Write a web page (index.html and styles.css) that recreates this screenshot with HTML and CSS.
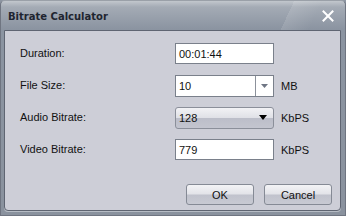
FILE: index.html
```html
<!DOCTYPE html>
<html>
<head>
<meta charset="utf-8">
<link rel="stylesheet" href="styles.css">
</head>
<body>
<div class="window">
  <div class="titlebar">
    <span class="title">Bitrate Calculator</span>
    <svg class="close" width="12" height="12" viewBox="0 0 12 12"><path d="M1.5 1.5 L10.5 10.5 M10.5 1.5 L1.5 10.5" stroke="#fff" stroke-width="2" stroke-linecap="square"/></svg>
  </div>
  <div class="panel">
    <div class="form">
      <label class="lbl">Duration:</label>
      <div class="field text">00:01:44</div>
      <span class="unit"></span>

      <label class="lbl">File Size:</label>
      <div class="field combo">
        <span class="val">10</span>
        <span class="drop"><svg width="7" height="4" viewBox="0 0 7 4"><path d="M0 0 H7 L3.5 4 Z" fill="#6f7684"/></svg></span>
      </div>
      <span class="unit">MB</span>

      <label class="lbl">Audio Bitrate:</label>
      <div class="field select">
        <span class="val">128</span>
        <svg width="8" height="5" viewBox="0 0 8 5"><path d="M0 0 H8 L4 5 Z" fill="#000"/></svg>
      </div>
      <span class="unit">KbPS</span>

      <label class="lbl">Video Bitrate:</label>
      <div class="field text">779</div>
      <span class="unit">KbPS</span>
    </div>
    <div class="buttons">
      <button class="btn">OK</button>
      <button class="btn">Cancel</button>
    </div>
  </div>
</div>
</body>
</html>
```
FILE: styles.css
```css
html, body {
  margin: 0;
  padding: 0;
  background: #8d95a1;
}
.window {
  width: 346px;
  height: 216px;
  display: flex;
  flex-direction: column;
  box-sizing: border-box;
  background: linear-gradient(180deg, #c2c7cd 0px, #a4abb5 6px, #8b94a1 28px, #8a929e 100%);
  border-radius: 5px 5px 0 0;
  border: 1px solid #6f7581;
  border-top-color: #9aa0a8;
  font-family: "Liberation Sans", Arial, sans-serif;
  font-size: 11px;
  color: #111;
}
.titlebar {
  height: 28px;
  flex: none;
  display: flex;
  align-items: center;
  justify-content: space-between;
  padding: 1px 11px 0 7px;
  background: linear-gradient(115deg, rgba(255,255,255,0) 82%, rgba(255,255,255,0.12) 82%, rgba(255,255,255,0) 90%);
}
.title {
  font-family: "DejaVu Sans", Verdana, sans-serif;
  font-weight: bold;
  font-size: 10px;
  color: #1f2530;
}
.close {
  display: block;
}
.panel {
  flex: 1;
  margin: 0 4px 4px 3px;
  background: #cdced7;
  border: 1px solid #5f6572;
  border-radius: 0 0 4px 4px;
  box-shadow: 0 1px 0 #b6bcc4;
  display: flex;
  flex-direction: column;
  justify-content: space-between;
  padding: 12px 8px 5px 15px;
}
.form {
  display: grid;
  grid-template-columns: 155px 99px auto;
  grid-auto-rows: 21px;
  row-gap: 11px;
  align-items: center;
}
.lbl {
  line-height: 13px;
}
.field {
  box-sizing: border-box;
  height: 21px;
  display: flex;
  align-items: center;
}
.text {
  background: #fff;
  border: 1px solid #7a808b;
  padding: 0 3px;
}
.combo {
  height: 22px;
  background: #fff;
  border: 1px solid #7a808b;
  padding-left: 3px;
}
.combo .val {
  flex: 1;
}
.drop {
  width: 17px;
  height: 100%;
  border-left: 1px solid #8c919b;
  display: flex;
  align-items: center;
  justify-content: center;
}
.drop svg, .select svg {
  display: block;
}
.select {
  height: 22px;
  border: 1px solid #8b8f9a;
  border-radius: 3px;
  background: linear-gradient(180deg, #f2f2f5 0%, #e0e1e7 48%, #bcbec9 52%, #c3c5cf 100%);
  padding: 0 6px 0 3px;
  justify-content: space-between;
}
.unit {
  padding-left: 7px;
}
.buttons {
  display: flex;
  justify-content: flex-end;
  gap: 10px;
}
.btn {
  width: 68px;
  height: 21px;
  box-sizing: border-box;
  border: 1px solid #858a95;
  border-radius: 3px;
  background: linear-gradient(180deg, #f3f3f6 0%, #e2e3e8 48%, #c0c2cc 52%, #c8cad3 100%);
  font-family: "Liberation Sans", Arial, sans-serif;
  font-size: 11px;
  color: #111;
  padding: 0;
}
```
